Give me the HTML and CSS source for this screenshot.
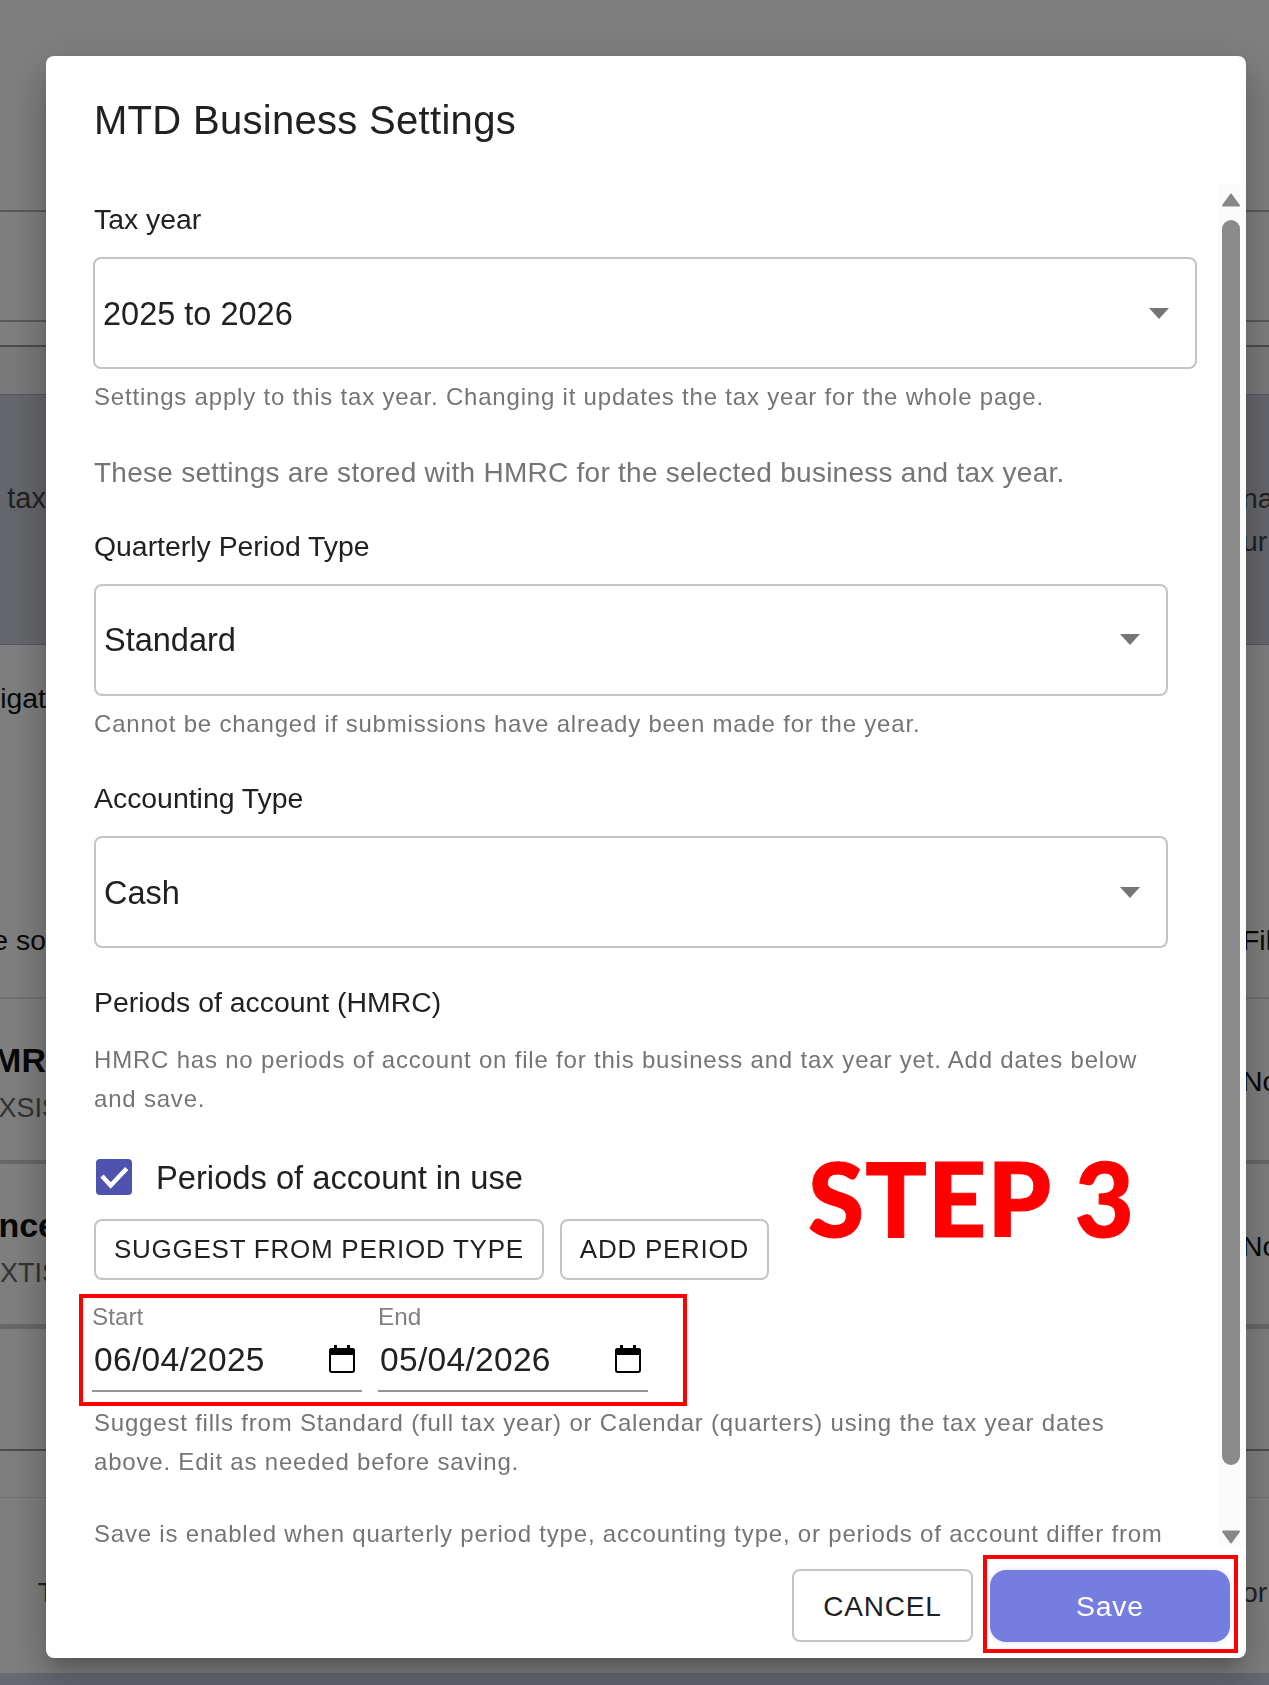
FILE: index.html
```html
<!DOCTYPE html>
<html lang="en">
<head>
<meta charset="utf-8">
<title>MTD Business Settings</title>
<link rel="stylesheet" href="styles.css">
</head>
<body>
<div class="page">
  <div class="band band-top"></div>
  <div class="band band-a"></div>
  <div class="band band-b"></div>
  <div class="band band-gap"></div>
  <div class="band panel">
    <div class="side left soft"><span>tax</span></div>
    <div class="side right soft"><span>na</span><span>ur</span></div>
  </div>
  <div class="band band-c">
    <div class="side left"><span>igat</span></div>
  </div>
  <div class="band band-d">
    <div class="side left"><span>e so</span></div>
    <div class="side right"><span>Fil</span></div>
  </div>
  <div class="band band-e">
    <div class="side left"><span class="strong">MR</span><span class="sub">XSIS</span></div>
    <div class="side right low"><span>No</span></div>
  </div>
  <div class="band band-f">
    <div class="side left"><span class="strong wide">nce</span><span class="sub">XTIS</span></div>
    <div class="side right low"><span>No</span></div>
  </div>
  <div class="band band-g"></div>
  <div class="band band-h"></div>
  <div class="band band-i">
    <div class="side left soft"><span class="over">T</span></div>
    <div class="side right soft"><span>or</span></div>
  </div>
  <div class="band band-foot"></div>
</div>
<div class="backdrop"></div>

<div class="dialog" role="dialog" aria-label="MTD Business Settings">
  <h2 class="dialog-title">MTD Business Settings</h2>
  <div class="dialog-middle">
    <div class="content">
      <div class="label first">Tax year</div>
      <div class="select select-wide">
        <span>2025 to 2026</span>
        <svg class="caret" viewBox="0 0 20 11"><path d="M0 0h20L10 11z"/></svg>
      </div>
      <p class="helper helper-near">Settings apply to this tax year. Changing it updates the tax year for the whole page.</p>
      <p class="intro">These settings are stored with HMRC for the selected business and tax year.</p>
      <div class="label after-intro">Quarterly Period Type</div>
      <div class="select">
        <span>Standard</span>
        <svg class="caret" viewBox="0 0 20 11"><path d="M0 0h20L10 11z"/></svg>
      </div>
      <p class="helper helper-mid">Cannot be changed if submissions have already been made for the year.</p>
      <div class="label after-helper">Accounting Type</div>
      <div class="select">
        <span>Cash</span>
        <svg class="caret" viewBox="0 0 20 11"><path d="M0 0h20L10 11z"/></svg>
      </div>
      <div class="label after-select">Periods of account (HMRC)</div>
      <p class="helper helper-block">HMRC has no periods of account on file for this business and tax year yet. Add dates below and save.</p>
      <label class="check-row">
        <span class="check">
          <svg viewBox="0 0 36 36"><path d="M6 17l8.700 9.500L30.700 9.500"/></svg>
        </span>
        <span class="check-text">Periods of account in use</span>
      </label>
      <div class="actions">
        <button class="btn">SUGGEST FROM PERIOD TYPE</button>
        <button class="btn">ADD PERIOD</button>
      </div>
      <div class="dates">
        <div class="date">
          <div class="date-label">Start</div>
          <div class="date-input">
            <span>06/04/2025</span>
            <svg class="cal" viewBox="0 0 26 28"><path class="cal-fill" d="M5 0h3v3h10V0h3v3h2a3 3 0 0 1 3 3v4H0V6a3 3 0 0 1 3-3h2z"/><rect class="cal-line" x="1" y="4" width="24" height="23" rx="2"/></svg>
          </div>
        </div>
        <div class="date">
          <div class="date-label">End</div>
          <div class="date-input">
            <span>05/04/2026</span>
            <svg class="cal" viewBox="0 0 26 28"><path class="cal-fill" d="M5 0h3v3h10V0h3v3h2a3 3 0 0 1 3 3v4H0V6a3 3 0 0 1 3-3h2z"/><rect class="cal-line" x="1" y="4" width="24" height="23" rx="2"/></svg>
          </div>
        </div>
      </div>
      <p class="helper helper-dates">Suggest fills from Standard (full tax year) or Calendar (quarters) using the tax year dates above. Edit as needed before saving.</p>
      <p class="helper helper-last">Save is enabled when quarterly period type, accounting type, or periods of account differ from</p>
    </div>
    <div class="scrollbar">
      <svg class="arrow" viewBox="0 0 18 14"><path d="M9 1.500L17 12.500H1z"/></svg>
      <div class="thumb"></div>
      <svg class="arrow" viewBox="0 0 18 14"><path d="M9 12.500L1 1.500h16z"/></svg>
    </div>
  </div>
  <div class="dialog-footer">
    <button class="btn btn-cancel">CANCEL</button>
    <button class="btn-save">Save</button>
  </div>
  <div class="step">STEP 3</div>
</div>
</body>
</html>
```
FILE: styles.css
```css
* { box-sizing: border-box; }
html, body { margin: 0; padding: 0; }
body {
  width: 1269px;
  height: 1685px;
  overflow: hidden;
  font-family: "Liberation Sans", Arial, sans-serif;
  color: #212121;
  background: #fff;
}

/* page behind the dialog */
.page { height: 1685px; overflow: hidden; }
.band {
  display: flex;
  justify-content: space-between;
  font-size: 28.400px;
  line-height: 43px;
  color: #111;
}
.side {
  width: 46px;
  overflow: hidden;
  white-space: nowrap;
  display: flex;
  flex-direction: column;
}
.side.left { align-items: flex-end; }
.side.right {
  width: 23px;
  align-items: flex-start;
  overflow: visible;
  margin-left: -4px;
  transform: translateX(-4px);
}
.side.right.low { margin-top: 20px; }
.side span { display: block; }
.side.soft { color: #444; }
.panel .side.left { font-size: 29px; }
.strong { font-weight: 700; font-size: 34px; line-height: 40px; }
.strong.wide { margin-right: -11px; }
.sub { color: #666; font-size: 27px; line-height: 40px; margin-top: 8px; margin-right: -14px; }
.over { margin-right: -9px; }
.band-top { height: 212px; border-bottom: 2px solid #b4b4b4; }
.band-a { height: 110px; border-bottom: 2px solid #b4b4b4; }
.band-b { height: 25px; border-bottom: 2px solid #999; }
.band-gap { height: 47px; background: #f4f4f4; }
.panel {
  height: 251px;
  padding-top: 82px;
  background: #cdcfd9;
  border-top: 1px solid #a9a9e0;
  border-bottom: 1px solid #a9a9e0;
}
.band-c { height: 210px; padding-top: 32px; }
.band-d { height: 144px; padding-top: 64px; border-bottom: 2px solid #e2e2e2; }
.band-e { height: 165px; padding-top: 41px; border-bottom: 4px solid #d0d0d0; }
.band-f { height: 165px; padding-top: 41px; border-bottom: 5px solid #d0d0d0; }
.band-g { height: 122px; border-bottom: 2px solid #9a9a9a; }
.band-h { height: 47px; border-bottom: 1px solid #e4e4e4; }
.band-i { height: 175px; padding-top: 73px; }
.band-foot { height: 12px; background: #cfd3e6; }

.backdrop {
  position: fixed;
  inset: 0;
  background: rgba(0, 0, 0, 0.5);
}

/* dialog */
.dialog {
  position: fixed;
  left: 46px;
  top: 56px;
  width: 1200px;
  height: 1602px;
  display: flex;
  flex-direction: column;
  background: #fff;
  border-radius: 8px;
  box-shadow: 0 11px 15px -7px rgba(0,0,0,.2), 0 24px 38px 3px rgba(0,0,0,.14), 0 9px 46px 8px rgba(0,0,0,.12);
}
.dialog-title {
  height: 128px;
  flex: none;
  margin: 0;
  padding: 36px 0 0 48px;
  font-size: 40px;
  line-height: 56px;
  font-weight: 400;
  letter-spacing: 0.0075em;
}
.dialog-middle {
  flex: none;
  height: 1364px;
  display: flex;
}
.content {
  flex: 1;
  overflow: hidden;
  padding-left: 48px;
}
.label {
  font-size: 28.400px;
  line-height: 38px;
  margin-bottom: 20px;
}
.label.first { margin-top: 16px; margin-bottom: 19px; }
.label.after-intro { margin-top: 34px; margin-bottom: 19px; }
.label.after-helper { margin-top: 36px; margin-bottom: 19px; }
.label.after-select { margin-top: 35px; margin-bottom: 20px; }

.select {
  width: 1074px;
  height: 112px;
  border: 2px solid #c4c4c4;
  border-radius: 8px;
  padding: 0 26px 0 8px;
  display: flex;
  align-items: center;
  justify-content: space-between;
  font-size: 32.500px;
}
.select > span { padding-top: 2px; }
.select-wide { width: 1104px; margin-left: -1px; }
.caret { width: 20px; height: 11px; fill: #757575; }

.helper {
  margin: 0;
  font-size: 24px;
  line-height: 38.500px;
  letter-spacing: 0.03333em;
  color: #757575;
  width: 1090px;
}
.helper-near { margin-top: 9px; }
.helper-mid { margin-top: 9px; }
.helper-block { margin-top: 0; }
.helper-dates { margin-top: 12px; }
.helper-last { margin-top: 34px; white-space: nowrap; }
.intro {
  margin: 36px 0 0;
  font-size: 28px;
  line-height: 40px;
  letter-spacing: 0.00938em;
  color: #757575;
}

.check-row {
  display: flex;
  align-items: center;
  margin-top: 41px;
  height: 36px;
  padding-left: 2px;
  gap: 24px;
}
.check {
  width: 36px;
  height: 36px;
  border-radius: 4px;
  background: #4d53ae;
  flex: none;
}
.check svg { display: block; fill: none; stroke: #fff; stroke-width: 4.500; }
.check-text { font-size: 32.700px; padding-top: 2px; }

.actions { display: flex; gap: 16px; margin-top: 24px; }
.btn {
  height: 61px;
  padding: 0 18px;
  border: 2px solid #c4c4c4;
  border-radius: 8px;
  background: #fff;
  color: #212121;
  font-family: inherit;
  font-size: 26px;
  letter-spacing: 0.02857em;
}

.dates {
  position: relative;
  display: flex;
  gap: 16px;
  margin: 24px 0 0 -2px;
  width: 556px;
}
.dates::after {
  content: "";
  position: absolute;
  left: -13px;
  right: -39px;
  top: -10px;
  bottom: -14px;
  border: 4px solid #f00;
}
.date { width: 270px; }
.date-label {
  font-size: 24.300px;
  line-height: 26px;
  color: #808080;
}
.date-input {
  margin-top: 9px;
  height: 53px;
  padding: 0 7px 11px 2px;
  border-bottom: 2px solid #949494;
  display: flex;
  align-items: center;
  justify-content: space-between;
  font-size: 33.500px;
  letter-spacing: 0.00938em;
}
.date-input > span { padding-top: 2px; }
.cal { width: 26px; height: 28px; flex: none; }
.cal-fill { fill: #000; }
.cal-line { fill: none; stroke: #000; stroke-width: 2; }

.scrollbar {
  width: 28px;
  flex: none;
  background: #fbfbfb;
  padding: 9px 6px 3px 4px;
  display: flex;
  flex-direction: column;
  align-items: center;
}
.arrow { width: 18px; height: 14px; flex: none; fill: #888; stroke: #888; stroke-width: 2; stroke-linejoin: round; }
.thumb {
  width: 18px;
  height: 1245px;
  margin: 13px 0 65px;
  border-radius: 9px;
  background: #8a8a8a;
  flex: none;
}

.dialog-footer {
  flex: 1;
  position: relative;
  display: flex;
  justify-content: flex-end;
  align-items: flex-start;
  gap: 17px;
  padding: 21px 16px 0 0;
}
.btn-cancel { width: 181px; height: 73px; font-size: 28px; padding: 2px 0 0; }
.btn-save {
  position: relative;
  width: 240px;
  height: 72px;
  margin-top: 1px;
  padding: 0;
  border: 0;
  border-radius: 16px;
  background: #757de0;
  color: #fff;
  font-family: inherit;
  font-size: 28.400px;
  font-weight: 500;
  letter-spacing: 0.02857em;
  box-shadow: 0 0 4px 2px #eef0ff;
}
.btn-save::after {
  content: "";
  position: absolute;
  left: -7px;
  right: -8px;
  top: -15px;
  bottom: -11px;
  border: 4px solid #f00;
}

.step {
  position: absolute;
  left: 762px;
  top: 1082px;
  font-family: Lato, "Open Sans", sans-serif;
  font-weight: 900;
  font-size: 102px;
  line-height: 120px;
  letter-spacing: 1px;
  -webkit-text-stroke: 1px #f00;
  color: #f00;
  white-space: nowrap;
}
```
